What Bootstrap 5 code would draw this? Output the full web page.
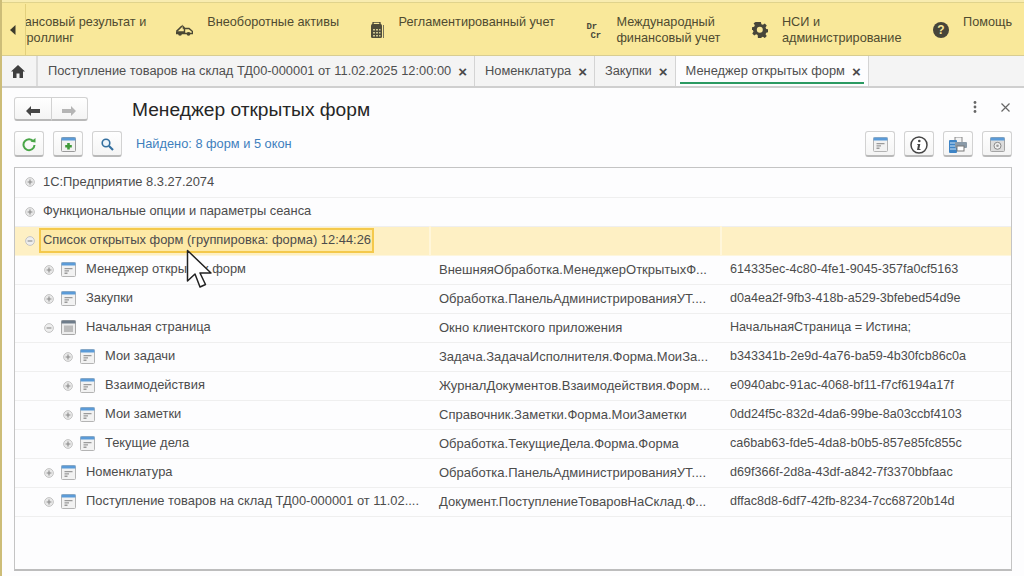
<!DOCTYPE html>
<html lang="ru">
<head>
    <meta charset="UTF-8">
    <title>Менеджер открытых форм</title>
    <link href="https://cdn.jsdelivr.net/npm/bootstrap@5.3.0/dist/css/bootstrap.min.css" rel="stylesheet">
    <style>
        html, body { height: 576px; overflow: hidden; }
        body { font-family: "Liberation Sans", Arial, sans-serif; background: #fdfdfe; color: #4a4a4a; border-left: 2px solid #cdbd78; }
        .sections { height: 56px; margin-left: -2px; padding-top: 4px; background: linear-gradient(#f8ecb0 0 2px, #e0d38c 2px 3px, #f9e89a 3px); border-bottom: 1px solid #d8cd92; font-size: 12.7px; line-height: 16px; color: #4f4b30; }
        .sec-arrow { width: 26px; height: 100%; border-right: 1px solid #e3d07c; flex: none; }
        .sec-strip { overflow: hidden; flex: 1; }
        .sec-item { flex: none; gap: 14px; padding-top: 10px; margin-right: 31.5px; white-space: nowrap; }
        .sec-item svg { flex: none; margin-top: 8px; }
        .sec-first { margin-left: -25px; margin-right: 30px; }
        .drcr { flex: none; font: bold 9px/9px "Liberation Mono", monospace; color: #4a4a3a; width: 16px; margin-top: 9px; }
        .drcr span { display: block; padding-left: 4px; }
        .help-mark { width: 16px; height: 16px; border-radius: 50%; background: #47453a; color: #f9e89a; font: bold 12px/16px "Liberation Sans", sans-serif; text-align: center; flex: none; margin-top: 8px; }

        .tabs-bar { height: 32px; margin-left: -2px; background: #f4f4f4; border-bottom: 2px solid #cfcfcf; font-size: 12.85px; color: #4f4f4f; }
        .tab-home { width: 38px; border-right: 2px solid #dcdcdc; }
        .tab-item { position: relative; padding: 0 7px 0 10px; border-right: 1px solid #d4d4d4; gap: 7px; white-space: nowrap; }
        .tab-on { background: #fdfdfe; }
        .tab-on::after { content: ""; position: absolute; left: 4px; right: 4px; bottom: 2px; height: 2px; background: #2b9a62; }
        .tab-close { font-size: 15px; font-weight: bold; line-height: 1; color: #4a4a4a; }

        .form-head { height: 42px; padding: 9px 12px 0; }
        .nav-btns { width: 74px; height: 24px; }
        .tool-btn { width: 30px; height: 26px; padding: 0; background: linear-gradient(#fff, #f4f4f4); border: 1px solid #d2d2d2; border-bottom: 2px solid #b9b9b9; border-radius: 3px; --bs-btn-hover-bg: #fff; }
        .nav-btns .tool-btn { flex: 1; height: 24px; }
        .form-title { margin: 1px 0 0 44px; font-size: 19.2px; font-weight: 400; color: #262626; }
        .form-menu { gap: 24px; margin-top: 4px; padding-right: 2px; }
        .form-bar { height: 37px; padding: 1px 12px 0; gap: 9px; }
        .found-text { height: 26px; margin-left: 5px; font-size: 12.8px; color: #3f80bd; }

        .tree-box { height: 404px; margin: 0 12px; border: 1px solid #c4c4c4; border-bottom: 2px solid #bdbdbd; background: #fdfdfe; }
        .tree-table { table-layout: fixed; width: 100%; margin: 0; font-size: 13px; --bs-table-bg: transparent; --bs-table-color: #4c4c4c; }
        .tree-table td { height: 29px; padding: 0; border-bottom: 1px solid #efefef; vertical-align: middle; white-space: nowrap; overflow: hidden; line-height: 1; }
        .tree-table td + td { padding-left: 9px; }
        .tree-table td:first-child { font-size: 12.9px; }
        .tree-table td:last-child { font-size: 12.6px; }
        .row-on td { background: #fef0c4; border-bottom-color: #fdf6dd; }
        .row-on td + td { border-left: 2px solid #fff6da; }
        .tree-name { gap: 8px; }
        .lvl-0 { padding-left: 10px; }
        .lvl-1 { padding-left: 29px; gap: 7px; }
        .lvl-2 { padding-left: 48px; gap: 7px; }
        .lvl-1 .form-ico, .lvl-2 .form-ico { margin-right: 3px; }
        .row-pick { display: inline-block; padding: 4px 1px 4px 2px; margin: -2px 0 -2px -4px; background: #fde9a6; border: 2px solid #f4c94c; }
        .cursor-mark { position: absolute; left: 186px; top: 249px; }
    </style>
</head>
<body class="d-flex flex-column">

    <svg width="0" height="0" class="position-absolute">
        <symbol id="exp" viewBox="0 0 10 10"><circle cx="5" cy="5" r="4.4" fill="#e8e8e8" stroke="#c4c4c4"/><path d="M2.6 5h4.8M5 2.6v4.8" stroke="#8a8a8a" stroke-width="1.1"/></symbol>
        <symbol id="col" viewBox="0 0 10 10"><circle cx="5" cy="5" r="4.4" fill="#eee" stroke="#c4c4c4"/><path d="M2.6 5h4.8" stroke="#8a8a8a" stroke-width="1.1"/></symbol>
        <symbol id="frm" viewBox="0 0 15 15"><rect x=".5" y=".5" width="14" height="14" rx="1" fill="#f2f2f2" stroke="#b4b4b4"/><rect x=".5" y=".5" width="14" height="3" fill="#5b9bd8"/><path d="M3.5 6h8v1.3h-8zM3.5 8.3h4.5v1.2H3.5zM3.5 10.5h3V12h-3z" fill="#9a9a9a"/></symbol>
        <symbol id="win" viewBox="0 0 15 15"><rect x=".5" y=".5" width="14" height="14" rx="1" fill="#ececec" stroke="#a8a8a8"/><rect x=".5" y=".5" width="14" height="3" fill="#6e7c8a"/><path d="M3 5.5h9V12H3z" fill="#bcbcbc"/></symbol>
    </svg>

    <div class="sections d-flex flex-none">
        <div class="sec-arrow d-flex align-items-center justify-content-center">
            <svg width="6" height="10" viewBox="0 0 6 10"><path d="M5.5 0v10L0 5z" fill="#3d3b2c"/></svg>
        </div>
        <div class="sec-strip d-flex">
            <div class="sec-item sec-first d-flex"><span>Финансовый результат и<br>контроллинг</span></div>
            <div class="sec-item d-flex">
                <svg width="17" height="14" viewBox="0 0 17 14"><path d="M.5 9.5L6 4" fill="none" stroke="#4a4734" stroke-width="1.6"/><path d="M6 2.5l3 3-2 2z" fill="#4a4734"/><path d="M.5 10h8V6.500h4.500l3.500 3v2H.5z" fill="none" stroke="#4a4734" stroke-width="1.4"/><circle cx="4" cy="11.800" r="1.900" fill="#4a4734"/><circle cx="12.500" cy="11.800" r="1.900" fill="#4a4734"/></svg>
                <span>Внеоборотные активы</span>
            </div>
            <div class="sec-item d-flex">
                <svg width="14" height="16" viewBox="0 0 14 16"><rect x="0" y="2" width="11" height="14" rx="1.5" fill="#4f4c3a"/><rect x="2" y="0" width="7" height="5" rx="1" fill="none" stroke="#4f4c3a" stroke-width="1.4"/><path d="M2 7h2v1.500H2zM5 7h2v1.500H5zM8 7h1.500v1.500H8zM2 10h2v1.500H2zM5 10h2v1.500H5zM8 10h1.500v1.500H8zM2 13h2v1.500H2zM5 13h2v1.500H5zM8 13h1.500v1.500H8z" fill="#cfc78f"/><path d="M12.500 3v13" stroke="#77735a"/></svg>
                <span>Регламентированный учет</span>
            </div>
            <div class="sec-item d-flex">
                <div class="drcr">Dr<span>Cr</span></div>
                <span>Международный<br>финансовый учет</span>
            </div>
            <div class="sec-item d-flex">
                <svg width="16" height="16" viewBox="0 0 16 16"><path d="M6.500 0h3l.5 2.300 1.600.7 2-1.300 2.100 2.100-1.300 2 .7 1.600 2.300.5v3l-2.300.5-.7 1.600 1.300 2-2.100 2.100-2-1.300-1.600.7-.5 2.300h-3L6 13.700 4.400 13l-2 1.300L.3 12.200l1.300-2L.9 8.600 0 8.500v-3l2.300-.5.700-1.600-1.300-2L3.800 0z" transform="scale(.94)" fill="#47453a"/><circle cx="7.800" cy="7.800" r="3" fill="#f9e89a"/></svg>
                <span>НСИ и<br>администрирование</span>
            </div>
            <div class="sec-item d-flex">
                <div class="help-mark">?</div>
                <span>Помощь</span>
            </div>
        </div>
    </div>

    <div class="tabs-bar d-flex flex-none">
        <div class="tab-home d-flex align-items-center justify-content-center">
            <svg width="14" height="13" viewBox="0 0 14 13"><path d="M7 0l7 6.500h-2V13H8.500V8.500h-3V13H2V6.500H0z" fill="#3f3f3f"/></svg>
        </div>
        <div class="tab-item d-flex align-items-center">Поступление товаров на склад ТД00-000001 от 11.02.2025 12:00:00 <span class="tab-close">×</span></div>
        <div class="tab-item d-flex align-items-center">Номенклатура <span class="tab-close">×</span></div>
        <div class="tab-item d-flex align-items-center">Закупки <span class="tab-close">×</span></div>
        <div class="tab-item tab-on d-flex align-items-center">Менеджер открытых форм <span class="tab-close">×</span></div>
    </div>

    <div class="form-head d-flex align-items-start flex-none">
        <div class="nav-btns btn-group">
            <button class="btn tool-btn" type="button"><svg width="14" height="10" viewBox="0 0 14 10"><path d="M5 0v3h9v4H5v3L0 5z" fill="#454545"/></svg></button>
            <button class="btn tool-btn" type="button"><svg width="14" height="10" viewBox="0 0 14 10"><path d="M9 0v3H0v4h9v3l5-5z" fill="#b5b5b5"/></svg></button>
        </div>
        <h1 class="form-title">Менеджер открытых форм</h1>
        <div class="form-menu d-flex align-items-center ms-auto">
            <svg width="4" height="12" viewBox="0 0 4 12"><circle cx="2" cy="1.500" r="1.400" fill="#666"/><circle cx="2" cy="6" r="1.400" fill="#666"/><circle cx="2" cy="10.500" r="1.400" fill="#666"/></svg>
            <svg width="9" height="9" viewBox="0 0 9 9"><path d="M.5.500l8 8M8.500.500l-8 8" stroke="#666" stroke-width="1.200"/></svg>
        </div>
    </div>

    <div class="form-bar d-flex align-items-start flex-none">
        <button class="btn tool-btn" type="button"><svg width="14" height="14" viewBox="0 0 14 14"><path d="M11.500 3.500A5.500 5.500 0 1 0 12.500 7" fill="none" stroke="#4aa648" stroke-width="2"/><path d="M8.500 3.800L13.500 4.500V0z" fill="#4aa648"/></svg></button>
        <button class="btn tool-btn" type="button"><svg width="15" height="15" viewBox="0 0 15 15"><rect x=".5" y=".5" width="14" height="14" rx="1" fill="#f2f2f2" stroke="#9a9a9a"/><rect x=".5" y=".5" width="14" height="3" fill="#5b9bd8"/><path d="M6.200 6h2.600v2h2v2.400h-2v2H6.200v-2h-2V8h2z" fill="#3f9a3a"/></svg></button>
        <button class="btn tool-btn" type="button"><svg width="13" height="13" viewBox="0 0 13 13"><circle cx="5" cy="5" r="3.800" fill="#eef5fb" stroke="#336f9f" stroke-width="1.600"/><path d="M8 8l4 4" stroke="#336f9f" stroke-width="2.200"/></svg></button>
        <span class="found-text d-flex align-items-center">Найдено: 8 форм и 5 окон</span>
        <button class="btn tool-btn ms-auto" type="button"><svg width="15" height="15" viewBox="0 0 15 15"><use href="#frm"/></svg></button>
        <button class="btn tool-btn" type="button"><svg width="18" height="18" viewBox="0 0 18 18"><circle cx="9" cy="9" r="8" fill="#fff" stroke="#444" stroke-width="1.500"/><circle cx="9.300" cy="5" r="1.300" fill="#444"/><path d="M7.300 8h3l-1 5h1.200v1H7l1-5H7.300z" fill="#444"/></svg></button>
        <button class="btn tool-btn" type="button"><svg width="18" height="16" viewBox="0 0 18 16"><rect x="6" y="0" width="7" height="6" fill="#f4f4f4" stroke="#888"/><rect x="0" y="3" width="8" height="13" rx="1" fill="#3d84c6"/><path d="M1 6h6M1 9h6M1 12h6" stroke="#cfe3f5"/><rect x="6" y="5" width="12" height="6" rx="1" fill="#8a9aa8"/><rect x="8" y="9" width="7" height="5" fill="#fff" stroke="#777"/></svg></button>
        <button class="btn tool-btn" type="button"><svg width="15" height="15" viewBox="0 0 15 15"><rect x=".5" y=".5" width="14" height="14" rx="1" fill="#dcdcdc" stroke="#a4a4a4"/><rect x=".5" y=".5" width="14" height="3" fill="#5b9bd8"/><circle cx="7.500" cy="8.800" r="3.500" fill="#f0f0f0" stroke="#888"/><circle cx="7.500" cy="8.800" r="1.300" fill="#999"/></svg></button>
    </div>

    <div class="tree-box flex-none">
        <table class="table tree-table">
            <colgroup><col style="width:415px"><col style="width:291px"><col></colgroup>
            <tbody>
                <tr><td><div class="tree-name lvl-0 d-flex align-items-center"><svg width="10" height="10"><use href="#exp"/></svg>1С:Предприятие 8.3.27.2074</div></td><td></td><td></td></tr>
                <tr><td><div class="tree-name lvl-0 d-flex align-items-center"><svg width="10" height="10"><use href="#exp"/></svg>Функциональные опции и параметры сеанса</div></td><td></td><td></td></tr>
                <tr class="row-on"><td><div class="tree-name lvl-0 d-flex align-items-center"><svg width="10" height="10"><use href="#col"/></svg><span class="row-pick">Список открытых форм (группировка: форма) 12:44:26</span></div></td><td></td><td></td></tr>
                <tr><td><div class="tree-name lvl-1 d-flex align-items-center"><svg width="10" height="10"><use href="#exp"/></svg><svg class="form-ico" width="15" height="15"><use href="#frm"/></svg>Менеджер открытых форм</div></td><td>ВнешняяОбработка.МенеджерОткрытыхФ...</td><td>614335ec-4c80-4fe1-9045-357fa0cf5163</td></tr>
                <tr><td><div class="tree-name lvl-1 d-flex align-items-center"><svg width="10" height="10"><use href="#exp"/></svg><svg class="form-ico" width="15" height="15"><use href="#frm"/></svg>Закупки</div></td><td>Обработка.ПанельАдминистрированияУТ....</td><td>d0a4ea2f-9fb3-418b-a529-3bfebed54d9e</td></tr>
                <tr><td><div class="tree-name lvl-1 d-flex align-items-center"><svg width="10" height="10"><use href="#col"/></svg><svg class="form-ico" width="15" height="15"><use href="#win"/></svg>Начальная страница</div></td><td>Окно клиентского приложения</td><td>НачальнаяСтраница = Истина;</td></tr>
                <tr><td><div class="tree-name lvl-2 d-flex align-items-center"><svg width="10" height="10"><use href="#exp"/></svg><svg class="form-ico" width="15" height="15"><use href="#frm"/></svg>Мои задачи</div></td><td>Задача.ЗадачаИсполнителя.Форма.МоиЗа...</td><td>b343341b-2e9d-4a76-ba59-4b30fcb86c0a</td></tr>
                <tr><td><div class="tree-name lvl-2 d-flex align-items-center"><svg width="10" height="10"><use href="#exp"/></svg><svg class="form-ico" width="15" height="15"><use href="#frm"/></svg>Взаимодействия</div></td><td>ЖурналДокументов.Взаимодействия.Форм...</td><td>e0940abc-91ac-4068-bf11-f7cf6194a17f</td></tr>
                <tr><td><div class="tree-name lvl-2 d-flex align-items-center"><svg width="10" height="10"><use href="#exp"/></svg><svg class="form-ico" width="15" height="15"><use href="#frm"/></svg>Мои заметки</div></td><td>Справочник.Заметки.Форма.МоиЗаметки</td><td>0dd24f5c-832d-4da6-99be-8a03ccbf4103</td></tr>
                <tr><td><div class="tree-name lvl-2 d-flex align-items-center"><svg width="10" height="10"><use href="#exp"/></svg><svg class="form-ico" width="15" height="15"><use href="#frm"/></svg>Текущие дела</div></td><td>Обработка.ТекущиеДела.Форма.Форма</td><td>ca6bab63-fde5-4da8-b0b5-857e85fc855c</td></tr>
                <tr><td><div class="tree-name lvl-1 d-flex align-items-center"><svg width="10" height="10"><use href="#exp"/></svg><svg class="form-ico" width="15" height="15"><use href="#frm"/></svg>Номенклатура</div></td><td>Обработка.ПанельАдминистрированияУТ....</td><td>d69f366f-2d8a-43df-a842-7f3370bbfaac</td></tr>
                <tr><td><div class="tree-name lvl-1 d-flex align-items-center"><svg width="10" height="10"><use href="#exp"/></svg><svg class="form-ico" width="15" height="15"><use href="#frm"/></svg>Поступление товаров на склад ТД00-000001 от 11.02....</div></td><td>Документ.ПоступлениеТоваровНаСклад.Ф...</td><td>dffac8d8-6df7-42fb-8234-7cc68720b14d</td></tr>
            </tbody>
        </table>
    </div>

    <svg class="cursor-mark" width="28" height="40" viewBox="0 0 28 40"><path d="M1.500 1.500V32l7.500-7L14 38l5.500-2.500L14 24h11z" fill="#fff" stroke="#222" stroke-width="1.500" stroke-linejoin="round"/></svg>

    <script src="https://cdn.jsdelivr.net/npm/bootstrap@5.3.0/dist/js/bootstrap.bundle.min.js"></script>
</body>
</html>
